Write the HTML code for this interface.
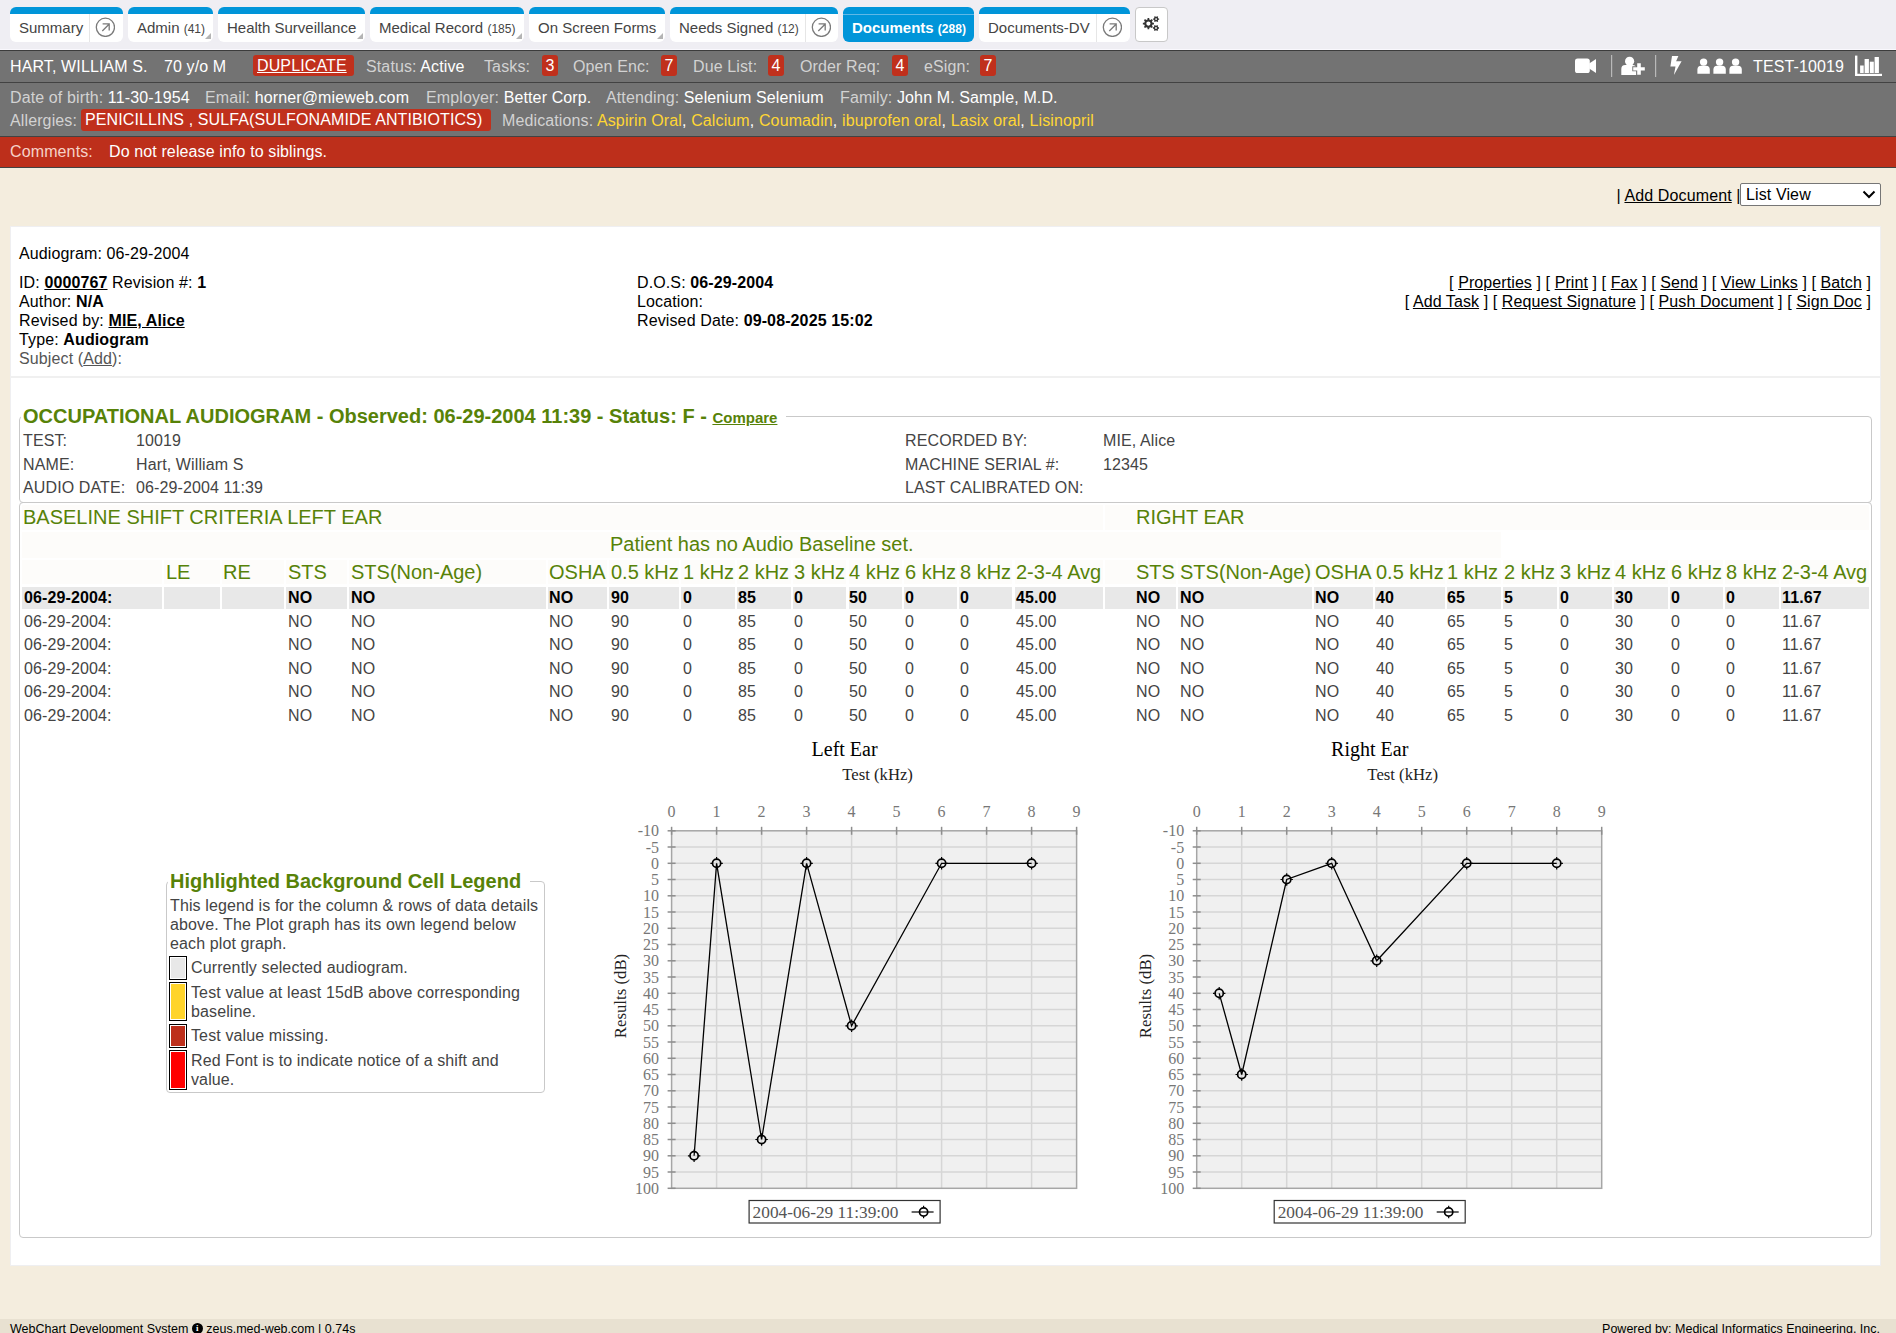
<!DOCTYPE html>
<html><head><meta charset="utf-8"><title>Audiogram</title>
<style>
*{box-sizing:border-box}
html,body{margin:0;padding:0}
body{width:1896px;height:1333px;overflow:hidden;position:relative;background:#f4edde;font-family:"Liberation Sans",sans-serif;font-size:16px;color:#000}
.a{position:absolute;white-space:nowrap;line-height:20px}
#topbar{position:absolute;left:0;top:0;width:1896px;height:49px;background:#efeef3}
.tab{position:absolute;top:7px;height:35px;background:#fff;border-radius:6px;border-top:7px solid #0095d9;font-size:15px;color:#444;white-space:nowrap}
.tab .t{position:absolute;top:3px;left:9px;line-height:22px}
.tab .c{font-size:12px}
.tab .div{position:absolute;top:0;bottom:0;width:1px;background:#e6e6e6}
.tab .ic{position:absolute;top:3px;width:20px;height:20px}
.tab .tri{position:absolute;right:2px;bottom:3px;width:0;height:0;border-left:6px solid transparent;border-bottom:6px solid #b4b4b4}
.tab .wl{position:absolute;left:0;right:0;top:0;height:1px;background:#5fb8e6}
.tab.act{background:#0095d9;color:#fff;font-weight:bold}
.hl{position:absolute;left:0;width:1896px;height:1px;background:#424242}
.pt{position:absolute;white-space:nowrap;font-size:16px;line-height:20px;color:#d2d2d2;letter-spacing:0.12px}
.pt b{font-weight:normal;color:#fff}
.badge{position:absolute;background:#c0301c;border-radius:3px;color:#fff;font-size:16px;line-height:22px;height:21px;letter-spacing:0.12px;text-align:center;white-space:nowrap}
.badge.l{text-align:left;padding-left:4px}
.med{color:#ffd633}
u{text-decoration:underline}
.g{color:#578208}
.fs{position:absolute;border:1px solid #c9c9c9;border-radius:4px}
.cell{position:absolute}
</style></head>
<body>

<div id="topbar"></div>
<div class="hl" style="top:49px;background:#f9f8fd"></div>
<div class="hl" style="top:50px;background:#3c3c3c"></div>
<div class="tab" style="left:10px;width:113px"><span class="t">Summary</span><div class="div" style="left:79px"></div><svg class="ic" style="left:85px" viewBox="0 0 20 20"><circle cx="10.4" cy="10.3" r="9.1" fill="none" stroke="#7a7a7a" stroke-width="1.3"/><path d="M7.3 14 L14 7.3 M7.6 6.9 H14.2 V13.4" fill="none" stroke="#7a7a7a" stroke-width="1.3"/></svg></div>
<div class="tab" style="left:128px;width:85px"><span class="t">Admin <span class="c">(41)</span></span><div class="tri"></div></div>
<div class="tab" style="left:218px;width:147px"><span class="t">Health Surveillance</span><div class="tri"></div></div>
<div class="tab" style="left:370px;width:154px"><span class="t">Medical Record <span class="c">(185)</span></span><div class="tri"></div></div>
<div class="tab" style="left:529px;width:136px"><span class="t">On Screen Forms</span><div class="tri"></div></div>
<div class="tab" style="left:670px;width:168px"><span class="t">Needs Signed <span class="c">(12)</span></span><div class="div" style="left:135px"></div><svg class="ic" style="left:141px" viewBox="0 0 20 20"><circle cx="10.4" cy="10.3" r="9.1" fill="none" stroke="#7a7a7a" stroke-width="1.3"/><path d="M7.3 14 L14 7.3 M7.6 6.9 H14.2 V13.4" fill="none" stroke="#7a7a7a" stroke-width="1.3"/></svg></div>
<div class="tab act" style="left:843px;width:131px"><span class="t">Documents <span class="c">(288)</span></span><div class="wl"></div></div>
<div class="tab" style="left:979px;width:151px"><span class="t">Documents-DV</span><div class="div" style="left:117px"></div><svg class="ic" style="left:123px" viewBox="0 0 20 20"><circle cx="10.4" cy="10.3" r="9.1" fill="none" stroke="#7a7a7a" stroke-width="1.3"/><path d="M7.3 14 L14 7.3 M7.6 6.9 H14.2 V13.4" fill="none" stroke="#7a7a7a" stroke-width="1.3"/></svg></div>
<div style="position:absolute;left:1135px;top:7px;width:33px;height:35px;background:#fff;border:1px solid #c8c8c8;border-radius:4px"></div>
<svg style="position:absolute;left:1135px;top:7px" width="34" height="35" viewBox="1135 7 34 35"><path d="M1152.28 21.99 L1152.50 22.70 L1153.94 22.76 L1153.94 24.44 L1152.50 24.50 L1152.28 25.21 L1151.94 25.86 L1152.91 26.92 L1151.72 28.11 L1150.66 27.14 L1150.01 27.48 L1149.30 27.70 L1149.24 29.14 L1147.56 29.14 L1147.50 27.70 L1146.79 27.48 L1146.14 27.14 L1145.08 28.11 L1143.89 26.92 L1144.86 25.86 L1144.52 25.21 L1144.30 24.50 L1142.86 24.44 L1142.86 22.76 L1144.30 22.70 L1144.52 21.99 L1144.86 21.34 L1143.89 20.28 L1145.08 19.09 L1146.14 20.06 L1146.79 19.72 L1147.50 19.50 L1147.56 18.06 L1149.24 18.06 L1149.30 19.50 L1150.01 19.72 L1150.66 20.06 L1151.72 19.09 L1152.91 20.28 L1151.94 21.34Z M1146.30 23.60 a2.10 2.10 0 1 0 4.20 0 a2.10 2.10 0 1 0 -4.20 0Z" fill="#333" fill-rule="evenodd"/><path d="M1158.09 17.95 L1158.29 18.39 L1159.13 18.42 L1159.13 19.78 L1158.29 19.81 L1158.09 20.25 L1157.81 20.64 L1158.20 21.38 L1157.03 22.06 L1156.58 21.35 L1156.10 21.40 L1155.62 21.35 L1155.17 22.06 L1154.00 21.38 L1154.39 20.64 L1154.11 20.25 L1153.91 19.81 L1153.07 19.78 L1153.07 18.42 L1153.91 18.39 L1154.11 17.95 L1154.39 17.56 L1154.00 16.82 L1155.17 16.14 L1155.62 16.85 L1156.10 16.80 L1156.58 16.85 L1157.03 16.14 L1158.20 16.82 L1157.81 17.56Z M1155.20 19.10 a0.90 0.90 0 1 0 1.80 0 a0.90 0.90 0 1 0 -1.80 0Z" fill="#333" fill-rule="evenodd"/><path d="M1157.99 26.85 L1158.19 27.29 L1159.03 27.32 L1159.03 28.68 L1158.19 28.71 L1157.99 29.15 L1157.71 29.54 L1158.10 30.28 L1156.93 30.96 L1156.48 30.25 L1156.00 30.30 L1155.52 30.25 L1155.07 30.96 L1153.90 30.28 L1154.29 29.54 L1154.01 29.15 L1153.81 28.71 L1152.97 28.68 L1152.97 27.32 L1153.81 27.29 L1154.01 26.85 L1154.29 26.46 L1153.90 25.72 L1155.07 25.04 L1155.52 25.75 L1156.00 25.70 L1156.48 25.75 L1156.93 25.04 L1158.10 25.72 L1157.71 26.46Z M1155.10 28.00 a0.90 0.90 0 1 0 1.80 0 a0.90 0.90 0 1 0 -1.80 0Z" fill="#333" fill-rule="evenodd"/></svg>
<div style="position:absolute;left:0;top:51px;width:1896px;height:86px;background:#737373"></div>
<div class="hl" style="top:82px"></div>
<div class="hl" style="top:136px"></div>
<div style="position:absolute;left:0;top:137px;width:1896px;height:30px;background:#bd2f1b"></div>
<div class="hl" style="top:167px"></div>
<div class="pt" style="left:10px;top:57px;color:#fff">HART, WILLIAM S.</div>
<div class="pt" style="left:164px;top:57px;color:#fff">70 y/o M</div>
<div class="badge l" style="left:253px;top:55px;width:101px;text-decoration:underline">DUPLICATE</div>
<div class="pt" style="left:366px;top:57px">Status: <b>Active</b></div>
<div class="pt" style="left:484px;top:57px">Tasks:</div>
<div class="badge" style="left:542px;top:55px;width:16px">3</div>
<div class="pt" style="left:573px;top:57px">Open Enc:</div>
<div class="badge" style="left:661px;top:55px;width:16px">7</div>
<div class="pt" style="left:693px;top:57px">Due List:</div>
<div class="badge" style="left:768px;top:55px;width:16px">4</div>
<div class="pt" style="left:800px;top:57px">Order Req:</div>
<div class="badge" style="left:892px;top:55px;width:16px">4</div>
<div class="pt" style="left:924px;top:57px">eSign:</div>
<div class="badge" style="left:980px;top:55px;width:16px">7</div>
<div class="pt" style="left:1753px;top:57px;color:#fff">TEST-10019</div>
<svg style="position:absolute;left:1570px;top:53px" width="320" height="26" viewBox="1570 53 320 26">
<g fill="#fff">
<rect x="1575" y="58.4" width="14.8" height="14.7" rx="2.6"/>
<path d="M1589.2 63.4 L1596 58.9 V72.9 L1589.2 68.6z"/>
<rect x="1611" y="55" width="1.2" height="22" fill="#b9b9b9"/>
<circle cx="1629.6" cy="61.3" r="4.6"/>
<path d="M1621.3 74.9 V69 q0-3.9 3.9-3.9 h7.4 q3.8 0 3.8 3.9 V74.9z"/>
<path d="M1636.3 62.3 h5.4 v4 h4 v5 h-4 v4.3 h-5.4 v-4.3 h-4 v-5 h4z" fill="#737373"/>
<path d="M1637.2 63.2 h3.6 v4 h4 v3.2 h-4 v4.4 h-3.6 v-4.4 h-4 v-3.2 h4z"/>
<rect x="1655" y="55" width="1.2" height="22" fill="#b9b9b9"/>
<path d="M1672 56 L1670.4 66.6 H1675.5 L1673.9 75 L1681.6 61.3 H1676.1 L1678.4 56z"/>
<circle cx="1703.6" cy="62.1" r="3.7"/><path d="M1697.4 73.8 V69.5 q0-3.8 3.8-3.8 h4.8 q3.8 0 3.8 3.8 V73.8 z"/>
<circle cx="1719.6" cy="62.1" r="3.7"/><path d="M1713.4 73.8 V69.5 q0-3.8 3.8-3.8 h4.8 q3.8 0 3.8 3.8 V73.8 z"/>
<circle cx="1735.6" cy="62.1" r="3.7"/><path d="M1729.4 73.8 V69.5 q0-3.8 3.8-3.8 h4.8 q3.8 0 3.8 3.8 V73.8 z"/>
<rect x="1855" y="55.6" width="2.4" height="20.4"/>
<rect x="1855" y="73.8" width="27" height="2.2"/>
<rect x="1860.1" y="65.5" width="3.6" height="7.5"/>
<rect x="1864.6" y="59" width="4.3" height="14"/>
<rect x="1869.8" y="61.7" width="4" height="11.3"/>
<rect x="1874.6" y="57" width="4.3" height="16"/>
</g></svg>
<div class="pt" style="left:10px;top:87.5px">Date of birth: <b>11-30-1954</b></div>
<div class="pt" style="left:205px;top:87.5px">Email: <b>horner@mieweb.com</b></div>
<div class="pt" style="left:426px;top:87.5px">Employer: <b>Better Corp.</b></div>
<div class="pt" style="left:606px;top:87.5px">Attending: <b>Selenium Selenium</b></div>
<div class="pt" style="left:840px;top:87.5px">Family: <b>John M. Sample, M.D.</b></div>
<div class="pt" style="left:10px;top:111px">Allergies:</div>
<div class="badge l" style="left:81px;top:109px;width:410px;height:22px">PENICILLINS , SULFA(SULFONAMIDE ANTIBIOTICS)</div>
<div class="pt" style="left:502px;top:111px">Medications: <span class="med">Aspirin Oral</span><b>,</b> <span class="med">Calcium</span><b>,</b> <span class="med">Coumadin</span><b>,</b> <span class="med">ibuprofen oral</span><b>,</b> <span class="med">Lasix oral</span><b>,</b> <span class="med">Lisinopril</span></div>
<div class="pt" style="left:10px;top:142px;color:#f6d2c8">Comments:</div>
<div class="pt" style="left:109px;top:142px;color:#fff">Do not release info to siblings.</div>
<div class="a" style="left:1616.5px;top:186px;color:#000;letter-spacing:0.12px">| <u>Add Document</u> |</div>
<div style="position:absolute;left:1740px;top:183px;width:141px;height:23px;background:#fff;border:1px solid #767676;border-radius:2px"></div>
<div class="a" style="left:1746px;top:185px;color:#000;letter-spacing:0.12px">List View</div>
<svg style="position:absolute;left:1862px;top:190px" width="14" height="9" viewBox="0 0 14 9"><path d="M1.5 1.5 L7 7 L12.5 1.5" fill="none" stroke="#000" stroke-width="2"/></svg>
<div style="position:absolute;left:10px;top:226px;width:1871px;height:1040px;background:#fff;border:1px solid #efeff1"></div>
<div class="a" style="left:19px;top:244px;font-size:16px;color:#000;letter-spacing:0.12px">Audiogram: 06-29-2004</div>
<div class="a" style="left:19px;top:273px;font-size:16px;color:#000;letter-spacing:0.12px">ID: <b><u>0000767</u></b> Revision #: <b>1</b></div>
<div class="a" style="left:19px;top:292px;font-size:16px;color:#000;letter-spacing:0.12px">Author: <b>N/A</b></div>
<div class="a" style="left:19px;top:311px;font-size:16px;color:#000;letter-spacing:0.12px">Revised by: <b><u>MIE, Alice</u></b></div>
<div class="a" style="left:19px;top:330px;font-size:16px;color:#000;letter-spacing:0.12px">Type: <b>Audiogram</b></div>
<div class="a" style="left:19px;top:349px;font-size:16px;color:#555;letter-spacing:0.12px">Subject (<u>Add</u>):</div>
<div class="a" style="left:637px;top:273px;font-size:16px;color:#000;letter-spacing:0.12px">D.O.S: <b>06-29-2004</b></div>
<div class="a" style="left:637px;top:292px;font-size:16px;color:#000;letter-spacing:0.12px">Location:</div>
<div class="a" style="left:637px;top:311px;font-size:16px;color:#000;letter-spacing:0.12px">Revised Date: <b>09-08-2025 15:02</b></div>
<div class="a" style="right:25px;top:273px;text-align:right;color:#000;letter-spacing:0.09px">[ <u>Properties</u> ] [ <u>Print</u> ] [ <u>Fax</u> ] [ <u>Send</u> ] [ <u>View Links</u> ] [ <u>Batch</u> ]</div>
<div class="a" style="right:25px;top:292px;text-align:right;color:#000;letter-spacing:0.09px">[ <u>Add Task</u> ] [ <u>Request Signature</u> ] [ <u>Push Document</u> ] [ <u>Sign Doc</u> ]</div>
<div style="position:absolute;left:10px;top:376px;width:1871px;height:2px;background:#f0f0f0"></div>
<div class="fs" style="left:19px;top:416px;width:1853px;height:87px"></div>
<div style="position:absolute;left:21px;top:405px;width:765px;height:14px;background:#fff"></div>
<div class="a" style="left:23px;top:406px;font-size:20px;color:#578208"><b>OCCUPATIONAL AUDIOGRAM - Observed: 06-29-2004 11:39 - Status: F - </b><u style="font-size:15px;font-weight:bold">Compare</u></div>
<div class="a" style="left:23px;top:431px;font-size:16px;color:#444;letter-spacing:0.12px">TEST:</div>
<div class="a" style="left:136px;top:431px;font-size:16px;color:#444;letter-spacing:0.12px">10019</div>
<div class="a" style="left:23px;top:454.5px;font-size:16px;color:#444;letter-spacing:0.12px">NAME:</div>
<div class="a" style="left:136px;top:454.5px;font-size:16px;color:#444;letter-spacing:0.12px">Hart, William S</div>
<div class="a" style="left:23px;top:478px;font-size:16px;color:#444;letter-spacing:0.12px">AUDIO DATE:</div>
<div class="a" style="left:136px;top:478px;font-size:16px;color:#444;letter-spacing:0.12px">06-29-2004 11:39</div>
<div class="a" style="left:905px;top:431px;font-size:16px;color:#444;letter-spacing:0.12px">RECORDED BY:</div>
<div class="a" style="left:1103px;top:431px;font-size:16px;color:#444;letter-spacing:0.12px">MIE, Alice</div>
<div class="a" style="left:905px;top:454.5px;font-size:16px;color:#444;letter-spacing:0.12px">MACHINE SERIAL #:</div>
<div class="a" style="left:1103px;top:454.5px;font-size:16px;color:#444;letter-spacing:0.12px">12345</div>
<div class="a" style="left:905px;top:478px;font-size:16px;color:#444;letter-spacing:0.12px">LAST CALIBRATED ON:</div>
<div class="fs" style="left:19px;top:502px;width:1853px;height:736px"></div>
<div class="cell" style="left:22px;top:505px;width:1081px;height:25px;background:#fdfcfa"></div>
<div class="cell" style="left:1105px;top:505px;width:764px;height:25px;background:#fdfcfa"></div>
<div class="cell" style="left:22px;top:532px;width:1479px;height:26px;background:#fdfcfa"></div>
<div class="a" style="left:23px;top:507px;font-size:20px;color:#578208">BASELINE SHIFT CRITERIA LEFT EAR</div>
<div class="a" style="left:1136px;top:507px;font-size:20px;color:#578208">RIGHT EAR</div>
<div class="a" style="left:610px;top:534px;font-size:20px;color:#578208">Patient has no Audio Baseline set.</div>
<div class="cell" style="left:22px;top:560px;width:140px;height:24px;background:#fdfcfa"></div>
<div class="cell" style="left:164px;top:560px;width:56px;height:24px;background:#fdfcfa"></div>
<div class="a" style="left:166px;top:562px;font-size:20px;color:#578208">LE</div>
<div class="cell" style="left:222px;top:560px;width:62px;height:24px;background:#fdfcfa"></div>
<div class="a" style="left:223px;top:562px;font-size:20px;color:#578208">RE</div>
<div class="cell" style="left:286px;top:560px;width:61px;height:24px;background:#fdfcfa"></div>
<div class="a" style="left:288px;top:562px;font-size:20px;color:#578208">STS</div>
<div class="cell" style="left:349px;top:560px;width:197px;height:24px;background:#fdfcfa"></div>
<div class="a" style="left:351px;top:562px;font-size:20px;color:#578208">STS(Non-Age)</div>
<div class="cell" style="left:548px;top:560px;width:59px;height:24px;background:#fdfcfa"></div>
<div class="a" style="left:549px;top:562px;font-size:20px;color:#578208">OSHA</div>
<div class="cell" style="left:609px;top:560px;width:70px;height:24px;background:#fdfcfa"></div>
<div class="a" style="left:611px;top:562px;font-size:20px;color:#578208">0.5 kHz</div>
<div class="cell" style="left:681px;top:560px;width:54px;height:24px;background:#fdfcfa"></div>
<div class="a" style="left:683px;top:562px;font-size:20px;color:#578208">1 kHz</div>
<div class="cell" style="left:737px;top:560px;width:54px;height:24px;background:#fdfcfa"></div>
<div class="a" style="left:738px;top:562px;font-size:20px;color:#578208">2 kHz</div>
<div class="cell" style="left:793px;top:560px;width:53px;height:24px;background:#fdfcfa"></div>
<div class="a" style="left:794px;top:562px;font-size:20px;color:#578208">3 kHz</div>
<div class="cell" style="left:849px;top:560px;width:53px;height:24px;background:#fdfcfa"></div>
<div class="a" style="left:849px;top:562px;font-size:20px;color:#578208">4 kHz</div>
<div class="cell" style="left:904px;top:560px;width:53px;height:24px;background:#fdfcfa"></div>
<div class="a" style="left:905px;top:562px;font-size:20px;color:#578208">6 kHz</div>
<div class="cell" style="left:959px;top:560px;width:53px;height:24px;background:#fdfcfa"></div>
<div class="a" style="left:960px;top:562px;font-size:20px;color:#578208">8 kHz</div>
<div class="cell" style="left:1015px;top:560px;width:88px;height:24px;background:#fdfcfa"></div>
<div class="a" style="left:1016px;top:562px;font-size:20px;color:#578208">2-3-4 Avg</div>
<div class="cell" style="left:1105px;top:560px;width:71px;height:24px;background:#fdfcfa"></div>
<div class="a" style="left:1136px;top:562px;font-size:20px;color:#578208">STS</div>
<div class="cell" style="left:1178px;top:560px;width:134px;height:24px;background:#fdfcfa"></div>
<div class="a" style="left:1180px;top:562px;font-size:20px;color:#578208">STS(Non-Age)</div>
<div class="cell" style="left:1314px;top:560px;width:59px;height:24px;background:#fdfcfa"></div>
<div class="a" style="left:1315px;top:562px;font-size:20px;color:#578208">OSHA</div>
<div class="cell" style="left:1375px;top:560px;width:70px;height:24px;background:#fdfcfa"></div>
<div class="a" style="left:1376px;top:562px;font-size:20px;color:#578208">0.5 kHz</div>
<div class="cell" style="left:1447px;top:560px;width:54px;height:24px;background:#fdfcfa"></div>
<div class="a" style="left:1447px;top:562px;font-size:20px;color:#578208">1 kHz</div>
<div class="cell" style="left:1503px;top:560px;width:54px;height:24px;background:#fdfcfa"></div>
<div class="a" style="left:1504px;top:562px;font-size:20px;color:#578208">2 kHz</div>
<div class="cell" style="left:1559px;top:560px;width:53px;height:24px;background:#fdfcfa"></div>
<div class="a" style="left:1560px;top:562px;font-size:20px;color:#578208">3 kHz</div>
<div class="cell" style="left:1614px;top:560px;width:54px;height:24px;background:#fdfcfa"></div>
<div class="a" style="left:1615px;top:562px;font-size:20px;color:#578208">4 kHz</div>
<div class="cell" style="left:1670px;top:560px;width:53px;height:24px;background:#fdfcfa"></div>
<div class="a" style="left:1671px;top:562px;font-size:20px;color:#578208">6 kHz</div>
<div class="cell" style="left:1725px;top:560px;width:54px;height:24px;background:#fdfcfa"></div>
<div class="a" style="left:1726px;top:562px;font-size:20px;color:#578208">8 kHz</div>
<div class="cell" style="left:1781px;top:560px;width:88px;height:24px;background:#fdfcfa"></div>
<div class="a" style="left:1782px;top:562px;font-size:20px;color:#578208">2-3-4 Avg</div>
<div class="cell" style="left:22px;top:587px;width:140px;height:22px;background:#e8e8e8"></div>
<div class="a" style="left:24px;top:588px;font-size:16px;color:#000;font-weight:bold;letter-spacing:0.12px">06-29-2004:</div>
<div class="cell" style="left:164px;top:587px;width:56px;height:22px;background:#e8e8e8"></div>
<div class="cell" style="left:222px;top:587px;width:62px;height:22px;background:#e8e8e8"></div>
<div class="cell" style="left:286px;top:587px;width:61px;height:22px;background:#e8e8e8"></div>
<div class="a" style="left:288px;top:588px;font-size:16px;color:#000;font-weight:bold;letter-spacing:0.12px">NO</div>
<div class="cell" style="left:349px;top:587px;width:197px;height:22px;background:#e8e8e8"></div>
<div class="a" style="left:351px;top:588px;font-size:16px;color:#000;font-weight:bold;letter-spacing:0.12px">NO</div>
<div class="cell" style="left:548px;top:587px;width:59px;height:22px;background:#e8e8e8"></div>
<div class="a" style="left:549px;top:588px;font-size:16px;color:#000;font-weight:bold;letter-spacing:0.12px">NO</div>
<div class="cell" style="left:609px;top:587px;width:70px;height:22px;background:#e8e8e8"></div>
<div class="a" style="left:611px;top:588px;font-size:16px;color:#000;font-weight:bold;letter-spacing:0.12px">90</div>
<div class="cell" style="left:681px;top:587px;width:54px;height:22px;background:#e8e8e8"></div>
<div class="a" style="left:683px;top:588px;font-size:16px;color:#000;font-weight:bold;letter-spacing:0.12px">0</div>
<div class="cell" style="left:737px;top:587px;width:54px;height:22px;background:#e8e8e8"></div>
<div class="a" style="left:738px;top:588px;font-size:16px;color:#000;font-weight:bold;letter-spacing:0.12px">85</div>
<div class="cell" style="left:793px;top:587px;width:53px;height:22px;background:#e8e8e8"></div>
<div class="a" style="left:794px;top:588px;font-size:16px;color:#000;font-weight:bold;letter-spacing:0.12px">0</div>
<div class="cell" style="left:849px;top:587px;width:53px;height:22px;background:#e8e8e8"></div>
<div class="a" style="left:849px;top:588px;font-size:16px;color:#000;font-weight:bold;letter-spacing:0.12px">50</div>
<div class="cell" style="left:904px;top:587px;width:53px;height:22px;background:#e8e8e8"></div>
<div class="a" style="left:905px;top:588px;font-size:16px;color:#000;font-weight:bold;letter-spacing:0.12px">0</div>
<div class="cell" style="left:959px;top:587px;width:53px;height:22px;background:#e8e8e8"></div>
<div class="a" style="left:960px;top:588px;font-size:16px;color:#000;font-weight:bold;letter-spacing:0.12px">0</div>
<div class="cell" style="left:1015px;top:587px;width:88px;height:22px;background:#e8e8e8"></div>
<div class="a" style="left:1016px;top:588px;font-size:16px;color:#000;font-weight:bold;letter-spacing:0.12px">45.00</div>
<div class="cell" style="left:1105px;top:587px;width:71px;height:22px;background:#e8e8e8"></div>
<div class="a" style="left:1136px;top:588px;font-size:16px;color:#000;font-weight:bold;letter-spacing:0.12px">NO</div>
<div class="cell" style="left:1178px;top:587px;width:134px;height:22px;background:#e8e8e8"></div>
<div class="a" style="left:1180px;top:588px;font-size:16px;color:#000;font-weight:bold;letter-spacing:0.12px">NO</div>
<div class="cell" style="left:1314px;top:587px;width:59px;height:22px;background:#e8e8e8"></div>
<div class="a" style="left:1315px;top:588px;font-size:16px;color:#000;font-weight:bold;letter-spacing:0.12px">NO</div>
<div class="cell" style="left:1375px;top:587px;width:70px;height:22px;background:#e8e8e8"></div>
<div class="a" style="left:1376px;top:588px;font-size:16px;color:#000;font-weight:bold;letter-spacing:0.12px">40</div>
<div class="cell" style="left:1447px;top:587px;width:54px;height:22px;background:#e8e8e8"></div>
<div class="a" style="left:1447px;top:588px;font-size:16px;color:#000;font-weight:bold;letter-spacing:0.12px">65</div>
<div class="cell" style="left:1503px;top:587px;width:54px;height:22px;background:#e8e8e8"></div>
<div class="a" style="left:1504px;top:588px;font-size:16px;color:#000;font-weight:bold;letter-spacing:0.12px">5</div>
<div class="cell" style="left:1559px;top:587px;width:53px;height:22px;background:#e8e8e8"></div>
<div class="a" style="left:1560px;top:588px;font-size:16px;color:#000;font-weight:bold;letter-spacing:0.12px">0</div>
<div class="cell" style="left:1614px;top:587px;width:54px;height:22px;background:#e8e8e8"></div>
<div class="a" style="left:1615px;top:588px;font-size:16px;color:#000;font-weight:bold;letter-spacing:0.12px">30</div>
<div class="cell" style="left:1670px;top:587px;width:53px;height:22px;background:#e8e8e8"></div>
<div class="a" style="left:1671px;top:588px;font-size:16px;color:#000;font-weight:bold;letter-spacing:0.12px">0</div>
<div class="cell" style="left:1725px;top:587px;width:54px;height:22px;background:#e8e8e8"></div>
<div class="a" style="left:1726px;top:588px;font-size:16px;color:#000;font-weight:bold;letter-spacing:0.12px">0</div>
<div class="cell" style="left:1781px;top:587px;width:88px;height:22px;background:#e8e8e8"></div>
<div class="a" style="left:1782px;top:588px;font-size:16px;color:#000;font-weight:bold;letter-spacing:0.12px">11.67</div>
<div class="a" style="left:24px;top:612px;font-size:16px;color:#444;letter-spacing:0.12px">06-29-2004:</div>
<div class="a" style="left:288px;top:612px;font-size:16px;color:#444;letter-spacing:0.12px">NO</div>
<div class="a" style="left:351px;top:612px;font-size:16px;color:#444;letter-spacing:0.12px">NO</div>
<div class="a" style="left:549px;top:612px;font-size:16px;color:#444;letter-spacing:0.12px">NO</div>
<div class="a" style="left:611px;top:612px;font-size:16px;color:#444;letter-spacing:0.12px">90</div>
<div class="a" style="left:683px;top:612px;font-size:16px;color:#444;letter-spacing:0.12px">0</div>
<div class="a" style="left:738px;top:612px;font-size:16px;color:#444;letter-spacing:0.12px">85</div>
<div class="a" style="left:794px;top:612px;font-size:16px;color:#444;letter-spacing:0.12px">0</div>
<div class="a" style="left:849px;top:612px;font-size:16px;color:#444;letter-spacing:0.12px">50</div>
<div class="a" style="left:905px;top:612px;font-size:16px;color:#444;letter-spacing:0.12px">0</div>
<div class="a" style="left:960px;top:612px;font-size:16px;color:#444;letter-spacing:0.12px">0</div>
<div class="a" style="left:1016px;top:612px;font-size:16px;color:#444;letter-spacing:0.12px">45.00</div>
<div class="a" style="left:1136px;top:612px;font-size:16px;color:#444;letter-spacing:0.12px">NO</div>
<div class="a" style="left:1180px;top:612px;font-size:16px;color:#444;letter-spacing:0.12px">NO</div>
<div class="a" style="left:1315px;top:612px;font-size:16px;color:#444;letter-spacing:0.12px">NO</div>
<div class="a" style="left:1376px;top:612px;font-size:16px;color:#444;letter-spacing:0.12px">40</div>
<div class="a" style="left:1447px;top:612px;font-size:16px;color:#444;letter-spacing:0.12px">65</div>
<div class="a" style="left:1504px;top:612px;font-size:16px;color:#444;letter-spacing:0.12px">5</div>
<div class="a" style="left:1560px;top:612px;font-size:16px;color:#444;letter-spacing:0.12px">0</div>
<div class="a" style="left:1615px;top:612px;font-size:16px;color:#444;letter-spacing:0.12px">30</div>
<div class="a" style="left:1671px;top:612px;font-size:16px;color:#444;letter-spacing:0.12px">0</div>
<div class="a" style="left:1726px;top:612px;font-size:16px;color:#444;letter-spacing:0.12px">0</div>
<div class="a" style="left:1782px;top:612px;font-size:16px;color:#444;letter-spacing:0.12px">11.67</div>
<div class="a" style="left:24px;top:635px;font-size:16px;color:#444;letter-spacing:0.12px">06-29-2004:</div>
<div class="a" style="left:288px;top:635px;font-size:16px;color:#444;letter-spacing:0.12px">NO</div>
<div class="a" style="left:351px;top:635px;font-size:16px;color:#444;letter-spacing:0.12px">NO</div>
<div class="a" style="left:549px;top:635px;font-size:16px;color:#444;letter-spacing:0.12px">NO</div>
<div class="a" style="left:611px;top:635px;font-size:16px;color:#444;letter-spacing:0.12px">90</div>
<div class="a" style="left:683px;top:635px;font-size:16px;color:#444;letter-spacing:0.12px">0</div>
<div class="a" style="left:738px;top:635px;font-size:16px;color:#444;letter-spacing:0.12px">85</div>
<div class="a" style="left:794px;top:635px;font-size:16px;color:#444;letter-spacing:0.12px">0</div>
<div class="a" style="left:849px;top:635px;font-size:16px;color:#444;letter-spacing:0.12px">50</div>
<div class="a" style="left:905px;top:635px;font-size:16px;color:#444;letter-spacing:0.12px">0</div>
<div class="a" style="left:960px;top:635px;font-size:16px;color:#444;letter-spacing:0.12px">0</div>
<div class="a" style="left:1016px;top:635px;font-size:16px;color:#444;letter-spacing:0.12px">45.00</div>
<div class="a" style="left:1136px;top:635px;font-size:16px;color:#444;letter-spacing:0.12px">NO</div>
<div class="a" style="left:1180px;top:635px;font-size:16px;color:#444;letter-spacing:0.12px">NO</div>
<div class="a" style="left:1315px;top:635px;font-size:16px;color:#444;letter-spacing:0.12px">NO</div>
<div class="a" style="left:1376px;top:635px;font-size:16px;color:#444;letter-spacing:0.12px">40</div>
<div class="a" style="left:1447px;top:635px;font-size:16px;color:#444;letter-spacing:0.12px">65</div>
<div class="a" style="left:1504px;top:635px;font-size:16px;color:#444;letter-spacing:0.12px">5</div>
<div class="a" style="left:1560px;top:635px;font-size:16px;color:#444;letter-spacing:0.12px">0</div>
<div class="a" style="left:1615px;top:635px;font-size:16px;color:#444;letter-spacing:0.12px">30</div>
<div class="a" style="left:1671px;top:635px;font-size:16px;color:#444;letter-spacing:0.12px">0</div>
<div class="a" style="left:1726px;top:635px;font-size:16px;color:#444;letter-spacing:0.12px">0</div>
<div class="a" style="left:1782px;top:635px;font-size:16px;color:#444;letter-spacing:0.12px">11.67</div>
<div class="a" style="left:24px;top:659px;font-size:16px;color:#444;letter-spacing:0.12px">06-29-2004:</div>
<div class="a" style="left:288px;top:659px;font-size:16px;color:#444;letter-spacing:0.12px">NO</div>
<div class="a" style="left:351px;top:659px;font-size:16px;color:#444;letter-spacing:0.12px">NO</div>
<div class="a" style="left:549px;top:659px;font-size:16px;color:#444;letter-spacing:0.12px">NO</div>
<div class="a" style="left:611px;top:659px;font-size:16px;color:#444;letter-spacing:0.12px">90</div>
<div class="a" style="left:683px;top:659px;font-size:16px;color:#444;letter-spacing:0.12px">0</div>
<div class="a" style="left:738px;top:659px;font-size:16px;color:#444;letter-spacing:0.12px">85</div>
<div class="a" style="left:794px;top:659px;font-size:16px;color:#444;letter-spacing:0.12px">0</div>
<div class="a" style="left:849px;top:659px;font-size:16px;color:#444;letter-spacing:0.12px">50</div>
<div class="a" style="left:905px;top:659px;font-size:16px;color:#444;letter-spacing:0.12px">0</div>
<div class="a" style="left:960px;top:659px;font-size:16px;color:#444;letter-spacing:0.12px">0</div>
<div class="a" style="left:1016px;top:659px;font-size:16px;color:#444;letter-spacing:0.12px">45.00</div>
<div class="a" style="left:1136px;top:659px;font-size:16px;color:#444;letter-spacing:0.12px">NO</div>
<div class="a" style="left:1180px;top:659px;font-size:16px;color:#444;letter-spacing:0.12px">NO</div>
<div class="a" style="left:1315px;top:659px;font-size:16px;color:#444;letter-spacing:0.12px">NO</div>
<div class="a" style="left:1376px;top:659px;font-size:16px;color:#444;letter-spacing:0.12px">40</div>
<div class="a" style="left:1447px;top:659px;font-size:16px;color:#444;letter-spacing:0.12px">65</div>
<div class="a" style="left:1504px;top:659px;font-size:16px;color:#444;letter-spacing:0.12px">5</div>
<div class="a" style="left:1560px;top:659px;font-size:16px;color:#444;letter-spacing:0.12px">0</div>
<div class="a" style="left:1615px;top:659px;font-size:16px;color:#444;letter-spacing:0.12px">30</div>
<div class="a" style="left:1671px;top:659px;font-size:16px;color:#444;letter-spacing:0.12px">0</div>
<div class="a" style="left:1726px;top:659px;font-size:16px;color:#444;letter-spacing:0.12px">0</div>
<div class="a" style="left:1782px;top:659px;font-size:16px;color:#444;letter-spacing:0.12px">11.67</div>
<div class="a" style="left:24px;top:682px;font-size:16px;color:#444;letter-spacing:0.12px">06-29-2004:</div>
<div class="a" style="left:288px;top:682px;font-size:16px;color:#444;letter-spacing:0.12px">NO</div>
<div class="a" style="left:351px;top:682px;font-size:16px;color:#444;letter-spacing:0.12px">NO</div>
<div class="a" style="left:549px;top:682px;font-size:16px;color:#444;letter-spacing:0.12px">NO</div>
<div class="a" style="left:611px;top:682px;font-size:16px;color:#444;letter-spacing:0.12px">90</div>
<div class="a" style="left:683px;top:682px;font-size:16px;color:#444;letter-spacing:0.12px">0</div>
<div class="a" style="left:738px;top:682px;font-size:16px;color:#444;letter-spacing:0.12px">85</div>
<div class="a" style="left:794px;top:682px;font-size:16px;color:#444;letter-spacing:0.12px">0</div>
<div class="a" style="left:849px;top:682px;font-size:16px;color:#444;letter-spacing:0.12px">50</div>
<div class="a" style="left:905px;top:682px;font-size:16px;color:#444;letter-spacing:0.12px">0</div>
<div class="a" style="left:960px;top:682px;font-size:16px;color:#444;letter-spacing:0.12px">0</div>
<div class="a" style="left:1016px;top:682px;font-size:16px;color:#444;letter-spacing:0.12px">45.00</div>
<div class="a" style="left:1136px;top:682px;font-size:16px;color:#444;letter-spacing:0.12px">NO</div>
<div class="a" style="left:1180px;top:682px;font-size:16px;color:#444;letter-spacing:0.12px">NO</div>
<div class="a" style="left:1315px;top:682px;font-size:16px;color:#444;letter-spacing:0.12px">NO</div>
<div class="a" style="left:1376px;top:682px;font-size:16px;color:#444;letter-spacing:0.12px">40</div>
<div class="a" style="left:1447px;top:682px;font-size:16px;color:#444;letter-spacing:0.12px">65</div>
<div class="a" style="left:1504px;top:682px;font-size:16px;color:#444;letter-spacing:0.12px">5</div>
<div class="a" style="left:1560px;top:682px;font-size:16px;color:#444;letter-spacing:0.12px">0</div>
<div class="a" style="left:1615px;top:682px;font-size:16px;color:#444;letter-spacing:0.12px">30</div>
<div class="a" style="left:1671px;top:682px;font-size:16px;color:#444;letter-spacing:0.12px">0</div>
<div class="a" style="left:1726px;top:682px;font-size:16px;color:#444;letter-spacing:0.12px">0</div>
<div class="a" style="left:1782px;top:682px;font-size:16px;color:#444;letter-spacing:0.12px">11.67</div>
<div class="a" style="left:24px;top:706px;font-size:16px;color:#444;letter-spacing:0.12px">06-29-2004:</div>
<div class="a" style="left:288px;top:706px;font-size:16px;color:#444;letter-spacing:0.12px">NO</div>
<div class="a" style="left:351px;top:706px;font-size:16px;color:#444;letter-spacing:0.12px">NO</div>
<div class="a" style="left:549px;top:706px;font-size:16px;color:#444;letter-spacing:0.12px">NO</div>
<div class="a" style="left:611px;top:706px;font-size:16px;color:#444;letter-spacing:0.12px">90</div>
<div class="a" style="left:683px;top:706px;font-size:16px;color:#444;letter-spacing:0.12px">0</div>
<div class="a" style="left:738px;top:706px;font-size:16px;color:#444;letter-spacing:0.12px">85</div>
<div class="a" style="left:794px;top:706px;font-size:16px;color:#444;letter-spacing:0.12px">0</div>
<div class="a" style="left:849px;top:706px;font-size:16px;color:#444;letter-spacing:0.12px">50</div>
<div class="a" style="left:905px;top:706px;font-size:16px;color:#444;letter-spacing:0.12px">0</div>
<div class="a" style="left:960px;top:706px;font-size:16px;color:#444;letter-spacing:0.12px">0</div>
<div class="a" style="left:1016px;top:706px;font-size:16px;color:#444;letter-spacing:0.12px">45.00</div>
<div class="a" style="left:1136px;top:706px;font-size:16px;color:#444;letter-spacing:0.12px">NO</div>
<div class="a" style="left:1180px;top:706px;font-size:16px;color:#444;letter-spacing:0.12px">NO</div>
<div class="a" style="left:1315px;top:706px;font-size:16px;color:#444;letter-spacing:0.12px">NO</div>
<div class="a" style="left:1376px;top:706px;font-size:16px;color:#444;letter-spacing:0.12px">40</div>
<div class="a" style="left:1447px;top:706px;font-size:16px;color:#444;letter-spacing:0.12px">65</div>
<div class="a" style="left:1504px;top:706px;font-size:16px;color:#444;letter-spacing:0.12px">5</div>
<div class="a" style="left:1560px;top:706px;font-size:16px;color:#444;letter-spacing:0.12px">0</div>
<div class="a" style="left:1615px;top:706px;font-size:16px;color:#444;letter-spacing:0.12px">30</div>
<div class="a" style="left:1671px;top:706px;font-size:16px;color:#444;letter-spacing:0.12px">0</div>
<div class="a" style="left:1726px;top:706px;font-size:16px;color:#444;letter-spacing:0.12px">0</div>
<div class="a" style="left:1782px;top:706px;font-size:16px;color:#444;letter-spacing:0.12px">11.67</div>
<div class="fs" style="left:166px;top:881px;width:379px;height:212px"></div>
<div style="position:absolute;left:168px;top:868px;width:362px;height:16px;background:#fff"></div>
<div class="a" style="left:170px;top:871px;font-size:20px;color:#578208"><b>Highlighted Background Cell Legend</b></div>
<div class="a" style="left:170px;top:896px;font-size:16px;color:#444;letter-spacing:0.12px">This legend is for the column &amp; rows of data details</div>
<div class="a" style="left:170px;top:915px;font-size:16px;color:#444;letter-spacing:0.12px">above. The Plot graph has its own legend below</div>
<div class="a" style="left:170px;top:934px;font-size:16px;color:#444;letter-spacing:0.12px">each plot graph.</div>
<div style="position:absolute;left:169px;top:956px;width:18px;height:24px;background:#e8e8e8;border:1px solid #000;box-shadow:inset 0 0 0 1px #fff"></div>
<div class="a" style="left:191px;top:958px;font-size:16px;color:#444;letter-spacing:0.12px">Currently selected audiogram.</div>
<div style="position:absolute;left:169px;top:982px;width:18px;height:39px;background:#ffd42a;border:1px solid #000;box-shadow:inset 0 0 0 1px #fff"></div>
<div class="a" style="left:191px;top:983px;font-size:16px;color:#444;letter-spacing:0.12px">Test value at least 15dB above corresponding</div>
<div class="a" style="left:191px;top:1002px;font-size:16px;color:#444;letter-spacing:0.12px">baseline.</div>
<div style="position:absolute;left:169px;top:1024px;width:18px;height:24px;background:#bd2f1b;border:1px solid #000;box-shadow:inset 0 0 0 1px #fff"></div>
<div class="a" style="left:191px;top:1026px;font-size:16px;color:#444;letter-spacing:0.12px">Test value missing.</div>
<div style="position:absolute;left:169px;top:1050px;width:18px;height:40px;background:#ff0000;border:1px solid #000;box-shadow:inset 0 0 0 1px #fff"></div>
<div class="a" style="left:191px;top:1051px;font-size:16px;color:#444;letter-spacing:0.12px">Red Font is to indicate notice of a shift and</div>
<div class="a" style="left:191px;top:1070px;font-size:16px;color:#444;letter-spacing:0.12px">value.</div>
<svg style="position:absolute;left:0;top:0" width="1896" height="1333" viewBox="0 0 1896 1333" font-family="Liberation Serif, serif" font-size="16" fill="#777">
<rect x="671.6" y="830.8" width="405.0" height="357.5" fill="#f0f0f0"/>
<line x1="716.6" y1="830.8" x2="716.6" y2="1188.3" stroke="#d6d6d6" stroke-width="1.5"/>
<line x1="761.6" y1="830.8" x2="761.6" y2="1188.3" stroke="#d6d6d6" stroke-width="1.5"/>
<line x1="806.6" y1="830.8" x2="806.6" y2="1188.3" stroke="#d6d6d6" stroke-width="1.5"/>
<line x1="851.6" y1="830.8" x2="851.6" y2="1188.3" stroke="#d6d6d6" stroke-width="1.5"/>
<line x1="896.6" y1="830.8" x2="896.6" y2="1188.3" stroke="#d6d6d6" stroke-width="1.5"/>
<line x1="941.6" y1="830.8" x2="941.6" y2="1188.3" stroke="#d6d6d6" stroke-width="1.5"/>
<line x1="986.6" y1="830.8" x2="986.6" y2="1188.3" stroke="#d6d6d6" stroke-width="1.5"/>
<line x1="1031.6" y1="830.8" x2="1031.6" y2="1188.3" stroke="#d6d6d6" stroke-width="1.5"/>
<line x1="671.6" y1="847.0" x2="1076.6" y2="847.0" stroke="#d6d6d6" stroke-width="1.5"/>
<line x1="671.6" y1="863.3" x2="1076.6" y2="863.3" stroke="#d6d6d6" stroke-width="1.5"/>
<line x1="671.6" y1="879.5" x2="1076.6" y2="879.5" stroke="#d6d6d6" stroke-width="1.5"/>
<line x1="671.6" y1="895.8" x2="1076.6" y2="895.8" stroke="#d6d6d6" stroke-width="1.5"/>
<line x1="671.6" y1="912.0" x2="1076.6" y2="912.0" stroke="#d6d6d6" stroke-width="1.5"/>
<line x1="671.6" y1="928.3" x2="1076.6" y2="928.3" stroke="#d6d6d6" stroke-width="1.5"/>
<line x1="671.6" y1="944.5" x2="1076.6" y2="944.5" stroke="#d6d6d6" stroke-width="1.5"/>
<line x1="671.6" y1="960.8" x2="1076.6" y2="960.8" stroke="#d6d6d6" stroke-width="1.5"/>
<line x1="671.6" y1="977.0" x2="1076.6" y2="977.0" stroke="#d6d6d6" stroke-width="1.5"/>
<line x1="671.6" y1="993.3" x2="1076.6" y2="993.3" stroke="#d6d6d6" stroke-width="1.5"/>
<line x1="671.6" y1="1009.5" x2="1076.6" y2="1009.5" stroke="#d6d6d6" stroke-width="1.5"/>
<line x1="671.6" y1="1025.8" x2="1076.6" y2="1025.8" stroke="#d6d6d6" stroke-width="1.5"/>
<line x1="671.6" y1="1042.0" x2="1076.6" y2="1042.0" stroke="#d6d6d6" stroke-width="1.5"/>
<line x1="671.6" y1="1058.3" x2="1076.6" y2="1058.3" stroke="#d6d6d6" stroke-width="1.5"/>
<line x1="671.6" y1="1074.5" x2="1076.6" y2="1074.5" stroke="#d6d6d6" stroke-width="1.5"/>
<line x1="671.6" y1="1090.8" x2="1076.6" y2="1090.8" stroke="#d6d6d6" stroke-width="1.5"/>
<line x1="671.6" y1="1107.0" x2="1076.6" y2="1107.0" stroke="#d6d6d6" stroke-width="1.5"/>
<line x1="671.6" y1="1123.3" x2="1076.6" y2="1123.3" stroke="#d6d6d6" stroke-width="1.5"/>
<line x1="671.6" y1="1139.5" x2="1076.6" y2="1139.5" stroke="#d6d6d6" stroke-width="1.5"/>
<line x1="671.6" y1="1155.8" x2="1076.6" y2="1155.8" stroke="#d6d6d6" stroke-width="1.5"/>
<line x1="671.6" y1="1172.0" x2="1076.6" y2="1172.0" stroke="#d6d6d6" stroke-width="1.5"/>
<rect x="671.6" y="830.8" width="405.0" height="357.5" fill="none" stroke="#a6a6a6" stroke-width="1.5"/>
<line x1="671.6" y1="826.8" x2="671.6" y2="834.8" stroke="#8e8e8e" stroke-width="1.5"/>
<text x="671.6" y="817" text-anchor="middle">0</text>
<line x1="716.6" y1="826.8" x2="716.6" y2="834.8" stroke="#8e8e8e" stroke-width="1.5"/>
<text x="716.6" y="817" text-anchor="middle">1</text>
<line x1="761.6" y1="826.8" x2="761.6" y2="834.8" stroke="#8e8e8e" stroke-width="1.5"/>
<text x="761.6" y="817" text-anchor="middle">2</text>
<line x1="806.6" y1="826.8" x2="806.6" y2="834.8" stroke="#8e8e8e" stroke-width="1.5"/>
<text x="806.6" y="817" text-anchor="middle">3</text>
<line x1="851.6" y1="826.8" x2="851.6" y2="834.8" stroke="#8e8e8e" stroke-width="1.5"/>
<text x="851.6" y="817" text-anchor="middle">4</text>
<line x1="896.6" y1="826.8" x2="896.6" y2="834.8" stroke="#8e8e8e" stroke-width="1.5"/>
<text x="896.6" y="817" text-anchor="middle">5</text>
<line x1="941.6" y1="826.8" x2="941.6" y2="834.8" stroke="#8e8e8e" stroke-width="1.5"/>
<text x="941.6" y="817" text-anchor="middle">6</text>
<line x1="986.6" y1="826.8" x2="986.6" y2="834.8" stroke="#8e8e8e" stroke-width="1.5"/>
<text x="986.6" y="817" text-anchor="middle">7</text>
<line x1="1031.6" y1="826.8" x2="1031.6" y2="834.8" stroke="#8e8e8e" stroke-width="1.5"/>
<text x="1031.6" y="817" text-anchor="middle">8</text>
<line x1="1076.6" y1="826.8" x2="1076.6" y2="834.8" stroke="#8e8e8e" stroke-width="1.5"/>
<text x="1076.6" y="817" text-anchor="middle">9</text>
<line x1="667.6" y1="830.8" x2="675.6" y2="830.8" stroke="#8e8e8e" stroke-width="1.5"/>
<text x="659.1" y="836.3" text-anchor="end">-10</text>
<line x1="667.6" y1="847.0" x2="675.6" y2="847.0" stroke="#8e8e8e" stroke-width="1.5"/>
<text x="659.1" y="852.5" text-anchor="end">-5</text>
<line x1="667.6" y1="863.3" x2="675.6" y2="863.3" stroke="#8e8e8e" stroke-width="1.5"/>
<text x="659.1" y="868.8" text-anchor="end">0</text>
<line x1="667.6" y1="879.5" x2="675.6" y2="879.5" stroke="#8e8e8e" stroke-width="1.5"/>
<text x="659.1" y="885.0" text-anchor="end">5</text>
<line x1="667.6" y1="895.8" x2="675.6" y2="895.8" stroke="#8e8e8e" stroke-width="1.5"/>
<text x="659.1" y="901.3" text-anchor="end">10</text>
<line x1="667.6" y1="912.0" x2="675.6" y2="912.0" stroke="#8e8e8e" stroke-width="1.5"/>
<text x="659.1" y="917.5" text-anchor="end">15</text>
<line x1="667.6" y1="928.3" x2="675.6" y2="928.3" stroke="#8e8e8e" stroke-width="1.5"/>
<text x="659.1" y="933.8" text-anchor="end">20</text>
<line x1="667.6" y1="944.5" x2="675.6" y2="944.5" stroke="#8e8e8e" stroke-width="1.5"/>
<text x="659.1" y="950.0" text-anchor="end">25</text>
<line x1="667.6" y1="960.8" x2="675.6" y2="960.8" stroke="#8e8e8e" stroke-width="1.5"/>
<text x="659.1" y="966.3" text-anchor="end">30</text>
<line x1="667.6" y1="977.0" x2="675.6" y2="977.0" stroke="#8e8e8e" stroke-width="1.5"/>
<text x="659.1" y="982.5" text-anchor="end">35</text>
<line x1="667.6" y1="993.3" x2="675.6" y2="993.3" stroke="#8e8e8e" stroke-width="1.5"/>
<text x="659.1" y="998.8" text-anchor="end">40</text>
<line x1="667.6" y1="1009.5" x2="675.6" y2="1009.5" stroke="#8e8e8e" stroke-width="1.5"/>
<text x="659.1" y="1015.0" text-anchor="end">45</text>
<line x1="667.6" y1="1025.8" x2="675.6" y2="1025.8" stroke="#8e8e8e" stroke-width="1.5"/>
<text x="659.1" y="1031.3" text-anchor="end">50</text>
<line x1="667.6" y1="1042.0" x2="675.6" y2="1042.0" stroke="#8e8e8e" stroke-width="1.5"/>
<text x="659.1" y="1047.5" text-anchor="end">55</text>
<line x1="667.6" y1="1058.3" x2="675.6" y2="1058.3" stroke="#8e8e8e" stroke-width="1.5"/>
<text x="659.1" y="1063.8" text-anchor="end">60</text>
<line x1="667.6" y1="1074.5" x2="675.6" y2="1074.5" stroke="#8e8e8e" stroke-width="1.5"/>
<text x="659.1" y="1080.0" text-anchor="end">65</text>
<line x1="667.6" y1="1090.8" x2="675.6" y2="1090.8" stroke="#8e8e8e" stroke-width="1.5"/>
<text x="659.1" y="1096.3" text-anchor="end">70</text>
<line x1="667.6" y1="1107.0" x2="675.6" y2="1107.0" stroke="#8e8e8e" stroke-width="1.5"/>
<text x="659.1" y="1112.5" text-anchor="end">75</text>
<line x1="667.6" y1="1123.3" x2="675.6" y2="1123.3" stroke="#8e8e8e" stroke-width="1.5"/>
<text x="659.1" y="1128.8" text-anchor="end">80</text>
<line x1="667.6" y1="1139.5" x2="675.6" y2="1139.5" stroke="#8e8e8e" stroke-width="1.5"/>
<text x="659.1" y="1145.0" text-anchor="end">85</text>
<line x1="667.6" y1="1155.8" x2="675.6" y2="1155.8" stroke="#8e8e8e" stroke-width="1.5"/>
<text x="659.1" y="1161.3" text-anchor="end">90</text>
<line x1="667.6" y1="1172.0" x2="675.6" y2="1172.0" stroke="#8e8e8e" stroke-width="1.5"/>
<text x="659.1" y="1177.5" text-anchor="end">95</text>
<line x1="667.6" y1="1188.3" x2="675.6" y2="1188.3" stroke="#8e8e8e" stroke-width="1.5"/>
<text x="659.1" y="1193.8" text-anchor="end">100</text>
<path d="M694.1 1155.8 L716.6 863.3 L761.6 1139.5 L806.6 863.3 L851.6 1025.8 L941.6 863.3 L1031.6 863.3" fill="none" stroke="#000" stroke-width="1.3"/>
<circle cx="694.1" cy="1155.8" r="4.1" fill="none" stroke="#000" stroke-width="1.7"/>
<path d="M689.7 1155.8h-1.8M698.5 1155.8h1.8M694.1 1151.4v-1.8M694.1 1160.2v1.8" stroke="#000" stroke-width="1.2"/>
<circle cx="716.6" cy="863.3" r="4.1" fill="none" stroke="#000" stroke-width="1.7"/>
<path d="M712.2 863.3h-1.8M721.0 863.3h1.8M716.6 858.9v-1.8M716.6 867.7v1.8" stroke="#000" stroke-width="1.2"/>
<circle cx="761.6" cy="1139.5" r="4.1" fill="none" stroke="#000" stroke-width="1.7"/>
<path d="M757.2 1139.5h-1.8M766.0 1139.5h1.8M761.6 1135.1v-1.8M761.6 1144.0v1.8" stroke="#000" stroke-width="1.2"/>
<circle cx="806.6" cy="863.3" r="4.1" fill="none" stroke="#000" stroke-width="1.7"/>
<path d="M802.2 863.3h-1.8M811.0 863.3h1.8M806.6 858.9v-1.8M806.6 867.7v1.8" stroke="#000" stroke-width="1.2"/>
<circle cx="851.6" cy="1025.8" r="4.1" fill="none" stroke="#000" stroke-width="1.7"/>
<path d="M847.2 1025.8h-1.8M856.0 1025.8h1.8M851.6 1021.4v-1.8M851.6 1030.2v1.8" stroke="#000" stroke-width="1.2"/>
<circle cx="941.6" cy="863.3" r="4.1" fill="none" stroke="#000" stroke-width="1.7"/>
<path d="M937.2 863.3h-1.8M946.0 863.3h1.8M941.6 858.9v-1.8M941.6 867.7v1.8" stroke="#000" stroke-width="1.2"/>
<circle cx="1031.6" cy="863.3" r="4.1" fill="none" stroke="#000" stroke-width="1.7"/>
<path d="M1027.2 863.3h-1.8M1036.0 863.3h1.8M1031.6 858.9v-1.8M1031.6 867.7v1.8" stroke="#000" stroke-width="1.2"/>
<text x="844.6" y="756" font-size="20" fill="#000" text-anchor="middle">Left Ear</text>
<text x="877.6" y="780" font-size="16.7" fill="#222" text-anchor="middle">Test (kHz)</text>
<text transform="translate(626.1 996) rotate(-90)" font-size="16.8" fill="#222" text-anchor="middle">Results (dB)</text>
<rect x="749.1" y="1200.5" width="191" height="22.5" fill="#fff" stroke="#333" stroke-width="1.2"/>
<text x="752.6" y="1217.5" font-size="17.3" fill="#555">2004-06-29 11:39:00</text>
<line x1="911.6" y1="1212" x2="933.6" y2="1212" stroke="#000" stroke-width="1.2"/>
<circle cx="923.6" cy="1212" r="4.1" fill="none" stroke="#000" stroke-width="1.7"/>
<path d="M923.6 1207.6v-1.8M923.6 1216.4v1.8" stroke="#000" stroke-width="1.2"/>
<rect x="1196.7" y="830.8" width="405.0" height="357.5" fill="#f0f0f0"/>
<line x1="1241.7" y1="830.8" x2="1241.7" y2="1188.3" stroke="#d6d6d6" stroke-width="1.5"/>
<line x1="1286.7" y1="830.8" x2="1286.7" y2="1188.3" stroke="#d6d6d6" stroke-width="1.5"/>
<line x1="1331.7" y1="830.8" x2="1331.7" y2="1188.3" stroke="#d6d6d6" stroke-width="1.5"/>
<line x1="1376.7" y1="830.8" x2="1376.7" y2="1188.3" stroke="#d6d6d6" stroke-width="1.5"/>
<line x1="1421.7" y1="830.8" x2="1421.7" y2="1188.3" stroke="#d6d6d6" stroke-width="1.5"/>
<line x1="1466.7" y1="830.8" x2="1466.7" y2="1188.3" stroke="#d6d6d6" stroke-width="1.5"/>
<line x1="1511.7" y1="830.8" x2="1511.7" y2="1188.3" stroke="#d6d6d6" stroke-width="1.5"/>
<line x1="1556.7" y1="830.8" x2="1556.7" y2="1188.3" stroke="#d6d6d6" stroke-width="1.5"/>
<line x1="1196.7" y1="847.0" x2="1601.7" y2="847.0" stroke="#d6d6d6" stroke-width="1.5"/>
<line x1="1196.7" y1="863.3" x2="1601.7" y2="863.3" stroke="#d6d6d6" stroke-width="1.5"/>
<line x1="1196.7" y1="879.5" x2="1601.7" y2="879.5" stroke="#d6d6d6" stroke-width="1.5"/>
<line x1="1196.7" y1="895.8" x2="1601.7" y2="895.8" stroke="#d6d6d6" stroke-width="1.5"/>
<line x1="1196.7" y1="912.0" x2="1601.7" y2="912.0" stroke="#d6d6d6" stroke-width="1.5"/>
<line x1="1196.7" y1="928.3" x2="1601.7" y2="928.3" stroke="#d6d6d6" stroke-width="1.5"/>
<line x1="1196.7" y1="944.5" x2="1601.7" y2="944.5" stroke="#d6d6d6" stroke-width="1.5"/>
<line x1="1196.7" y1="960.8" x2="1601.7" y2="960.8" stroke="#d6d6d6" stroke-width="1.5"/>
<line x1="1196.7" y1="977.0" x2="1601.7" y2="977.0" stroke="#d6d6d6" stroke-width="1.5"/>
<line x1="1196.7" y1="993.3" x2="1601.7" y2="993.3" stroke="#d6d6d6" stroke-width="1.5"/>
<line x1="1196.7" y1="1009.5" x2="1601.7" y2="1009.5" stroke="#d6d6d6" stroke-width="1.5"/>
<line x1="1196.7" y1="1025.8" x2="1601.7" y2="1025.8" stroke="#d6d6d6" stroke-width="1.5"/>
<line x1="1196.7" y1="1042.0" x2="1601.7" y2="1042.0" stroke="#d6d6d6" stroke-width="1.5"/>
<line x1="1196.7" y1="1058.3" x2="1601.7" y2="1058.3" stroke="#d6d6d6" stroke-width="1.5"/>
<line x1="1196.7" y1="1074.5" x2="1601.7" y2="1074.5" stroke="#d6d6d6" stroke-width="1.5"/>
<line x1="1196.7" y1="1090.8" x2="1601.7" y2="1090.8" stroke="#d6d6d6" stroke-width="1.5"/>
<line x1="1196.7" y1="1107.0" x2="1601.7" y2="1107.0" stroke="#d6d6d6" stroke-width="1.5"/>
<line x1="1196.7" y1="1123.3" x2="1601.7" y2="1123.3" stroke="#d6d6d6" stroke-width="1.5"/>
<line x1="1196.7" y1="1139.5" x2="1601.7" y2="1139.5" stroke="#d6d6d6" stroke-width="1.5"/>
<line x1="1196.7" y1="1155.8" x2="1601.7" y2="1155.8" stroke="#d6d6d6" stroke-width="1.5"/>
<line x1="1196.7" y1="1172.0" x2="1601.7" y2="1172.0" stroke="#d6d6d6" stroke-width="1.5"/>
<rect x="1196.7" y="830.8" width="405.0" height="357.5" fill="none" stroke="#a6a6a6" stroke-width="1.5"/>
<line x1="1196.7" y1="826.8" x2="1196.7" y2="834.8" stroke="#8e8e8e" stroke-width="1.5"/>
<text x="1196.7" y="817" text-anchor="middle">0</text>
<line x1="1241.7" y1="826.8" x2="1241.7" y2="834.8" stroke="#8e8e8e" stroke-width="1.5"/>
<text x="1241.7" y="817" text-anchor="middle">1</text>
<line x1="1286.7" y1="826.8" x2="1286.7" y2="834.8" stroke="#8e8e8e" stroke-width="1.5"/>
<text x="1286.7" y="817" text-anchor="middle">2</text>
<line x1="1331.7" y1="826.8" x2="1331.7" y2="834.8" stroke="#8e8e8e" stroke-width="1.5"/>
<text x="1331.7" y="817" text-anchor="middle">3</text>
<line x1="1376.7" y1="826.8" x2="1376.7" y2="834.8" stroke="#8e8e8e" stroke-width="1.5"/>
<text x="1376.7" y="817" text-anchor="middle">4</text>
<line x1="1421.7" y1="826.8" x2="1421.7" y2="834.8" stroke="#8e8e8e" stroke-width="1.5"/>
<text x="1421.7" y="817" text-anchor="middle">5</text>
<line x1="1466.7" y1="826.8" x2="1466.7" y2="834.8" stroke="#8e8e8e" stroke-width="1.5"/>
<text x="1466.7" y="817" text-anchor="middle">6</text>
<line x1="1511.7" y1="826.8" x2="1511.7" y2="834.8" stroke="#8e8e8e" stroke-width="1.5"/>
<text x="1511.7" y="817" text-anchor="middle">7</text>
<line x1="1556.7" y1="826.8" x2="1556.7" y2="834.8" stroke="#8e8e8e" stroke-width="1.5"/>
<text x="1556.7" y="817" text-anchor="middle">8</text>
<line x1="1601.7" y1="826.8" x2="1601.7" y2="834.8" stroke="#8e8e8e" stroke-width="1.5"/>
<text x="1601.7" y="817" text-anchor="middle">9</text>
<line x1="1192.7" y1="830.8" x2="1200.7" y2="830.8" stroke="#8e8e8e" stroke-width="1.5"/>
<text x="1184.2" y="836.3" text-anchor="end">-10</text>
<line x1="1192.7" y1="847.0" x2="1200.7" y2="847.0" stroke="#8e8e8e" stroke-width="1.5"/>
<text x="1184.2" y="852.5" text-anchor="end">-5</text>
<line x1="1192.7" y1="863.3" x2="1200.7" y2="863.3" stroke="#8e8e8e" stroke-width="1.5"/>
<text x="1184.2" y="868.8" text-anchor="end">0</text>
<line x1="1192.7" y1="879.5" x2="1200.7" y2="879.5" stroke="#8e8e8e" stroke-width="1.5"/>
<text x="1184.2" y="885.0" text-anchor="end">5</text>
<line x1="1192.7" y1="895.8" x2="1200.7" y2="895.8" stroke="#8e8e8e" stroke-width="1.5"/>
<text x="1184.2" y="901.3" text-anchor="end">10</text>
<line x1="1192.7" y1="912.0" x2="1200.7" y2="912.0" stroke="#8e8e8e" stroke-width="1.5"/>
<text x="1184.2" y="917.5" text-anchor="end">15</text>
<line x1="1192.7" y1="928.3" x2="1200.7" y2="928.3" stroke="#8e8e8e" stroke-width="1.5"/>
<text x="1184.2" y="933.8" text-anchor="end">20</text>
<line x1="1192.7" y1="944.5" x2="1200.7" y2="944.5" stroke="#8e8e8e" stroke-width="1.5"/>
<text x="1184.2" y="950.0" text-anchor="end">25</text>
<line x1="1192.7" y1="960.8" x2="1200.7" y2="960.8" stroke="#8e8e8e" stroke-width="1.5"/>
<text x="1184.2" y="966.3" text-anchor="end">30</text>
<line x1="1192.7" y1="977.0" x2="1200.7" y2="977.0" stroke="#8e8e8e" stroke-width="1.5"/>
<text x="1184.2" y="982.5" text-anchor="end">35</text>
<line x1="1192.7" y1="993.3" x2="1200.7" y2="993.3" stroke="#8e8e8e" stroke-width="1.5"/>
<text x="1184.2" y="998.8" text-anchor="end">40</text>
<line x1="1192.7" y1="1009.5" x2="1200.7" y2="1009.5" stroke="#8e8e8e" stroke-width="1.5"/>
<text x="1184.2" y="1015.0" text-anchor="end">45</text>
<line x1="1192.7" y1="1025.8" x2="1200.7" y2="1025.8" stroke="#8e8e8e" stroke-width="1.5"/>
<text x="1184.2" y="1031.3" text-anchor="end">50</text>
<line x1="1192.7" y1="1042.0" x2="1200.7" y2="1042.0" stroke="#8e8e8e" stroke-width="1.5"/>
<text x="1184.2" y="1047.5" text-anchor="end">55</text>
<line x1="1192.7" y1="1058.3" x2="1200.7" y2="1058.3" stroke="#8e8e8e" stroke-width="1.5"/>
<text x="1184.2" y="1063.8" text-anchor="end">60</text>
<line x1="1192.7" y1="1074.5" x2="1200.7" y2="1074.5" stroke="#8e8e8e" stroke-width="1.5"/>
<text x="1184.2" y="1080.0" text-anchor="end">65</text>
<line x1="1192.7" y1="1090.8" x2="1200.7" y2="1090.8" stroke="#8e8e8e" stroke-width="1.5"/>
<text x="1184.2" y="1096.3" text-anchor="end">70</text>
<line x1="1192.7" y1="1107.0" x2="1200.7" y2="1107.0" stroke="#8e8e8e" stroke-width="1.5"/>
<text x="1184.2" y="1112.5" text-anchor="end">75</text>
<line x1="1192.7" y1="1123.3" x2="1200.7" y2="1123.3" stroke="#8e8e8e" stroke-width="1.5"/>
<text x="1184.2" y="1128.8" text-anchor="end">80</text>
<line x1="1192.7" y1="1139.5" x2="1200.7" y2="1139.5" stroke="#8e8e8e" stroke-width="1.5"/>
<text x="1184.2" y="1145.0" text-anchor="end">85</text>
<line x1="1192.7" y1="1155.8" x2="1200.7" y2="1155.8" stroke="#8e8e8e" stroke-width="1.5"/>
<text x="1184.2" y="1161.3" text-anchor="end">90</text>
<line x1="1192.7" y1="1172.0" x2="1200.7" y2="1172.0" stroke="#8e8e8e" stroke-width="1.5"/>
<text x="1184.2" y="1177.5" text-anchor="end">95</text>
<line x1="1192.7" y1="1188.3" x2="1200.7" y2="1188.3" stroke="#8e8e8e" stroke-width="1.5"/>
<text x="1184.2" y="1193.8" text-anchor="end">100</text>
<path d="M1219.2 993.3 L1241.7 1074.5 L1286.7 879.5 L1331.7 863.3 L1376.7 960.8 L1466.7 863.3 L1556.7 863.3" fill="none" stroke="#000" stroke-width="1.3"/>
<circle cx="1219.2" cy="993.3" r="4.1" fill="none" stroke="#000" stroke-width="1.7"/>
<path d="M1214.8 993.3h-1.8M1223.6 993.3h1.8M1219.2 988.9v-1.8M1219.2 997.7v1.8" stroke="#000" stroke-width="1.2"/>
<circle cx="1241.7" cy="1074.5" r="4.1" fill="none" stroke="#000" stroke-width="1.7"/>
<path d="M1237.3 1074.5h-1.8M1246.1 1074.5h1.8M1241.7 1070.1v-1.8M1241.7 1079.0v1.8" stroke="#000" stroke-width="1.2"/>
<circle cx="1286.7" cy="879.5" r="4.1" fill="none" stroke="#000" stroke-width="1.7"/>
<path d="M1282.3 879.5h-1.8M1291.1 879.5h1.8M1286.7 875.1v-1.8M1286.7 883.9v1.8" stroke="#000" stroke-width="1.2"/>
<circle cx="1331.7" cy="863.3" r="4.1" fill="none" stroke="#000" stroke-width="1.7"/>
<path d="M1327.3 863.3h-1.8M1336.1 863.3h1.8M1331.7 858.9v-1.8M1331.7 867.7v1.8" stroke="#000" stroke-width="1.2"/>
<circle cx="1376.7" cy="960.8" r="4.1" fill="none" stroke="#000" stroke-width="1.7"/>
<path d="M1372.3 960.8h-1.8M1381.1 960.8h1.8M1376.7 956.4v-1.8M1376.7 965.2v1.8" stroke="#000" stroke-width="1.2"/>
<circle cx="1466.7" cy="863.3" r="4.1" fill="none" stroke="#000" stroke-width="1.7"/>
<path d="M1462.3 863.3h-1.8M1471.1 863.3h1.8M1466.7 858.9v-1.8M1466.7 867.7v1.8" stroke="#000" stroke-width="1.2"/>
<circle cx="1556.7" cy="863.3" r="4.1" fill="none" stroke="#000" stroke-width="1.7"/>
<path d="M1552.3 863.3h-1.8M1561.1 863.3h1.8M1556.7 858.9v-1.8M1556.7 867.7v1.8" stroke="#000" stroke-width="1.2"/>
<text x="1369.7" y="756" font-size="20" fill="#000" text-anchor="middle">Right Ear</text>
<text x="1402.7" y="780" font-size="16.7" fill="#222" text-anchor="middle">Test (kHz)</text>
<text transform="translate(1151.2 996) rotate(-90)" font-size="16.8" fill="#222" text-anchor="middle">Results (dB)</text>
<rect x="1274.2" y="1200.5" width="191" height="22.5" fill="#fff" stroke="#333" stroke-width="1.2"/>
<text x="1277.7" y="1217.5" font-size="17.3" fill="#555">2004-06-29 11:39:00</text>
<line x1="1436.7" y1="1212" x2="1458.7" y2="1212" stroke="#000" stroke-width="1.2"/>
<circle cx="1448.7" cy="1212" r="4.1" fill="none" stroke="#000" stroke-width="1.7"/>
<path d="M1448.7 1207.6v-1.8M1448.7 1216.4v1.8" stroke="#000" stroke-width="1.2"/>
</svg>
<div style="position:absolute;left:0;top:1319px;width:1896px;height:14px;background:#e8e1d1"></div>
<div class="a" style="left:10px;top:1319px;font-size:12.5px;color:#000">WebChart Development System <span style="display:inline-block;width:11px;height:11px;border-radius:50%;background:#000;color:#fff;font:bold 9px/11px 'Liberation Serif';text-align:center;vertical-align:2px">i</span> zeus.med-web.com | 0.74s</div>
<div class="a" style="right:16px;top:1319px;font-size:12.5px;color:#000">Powered by: Medical Informatics Engineering, Inc.</div>
</body></html>
